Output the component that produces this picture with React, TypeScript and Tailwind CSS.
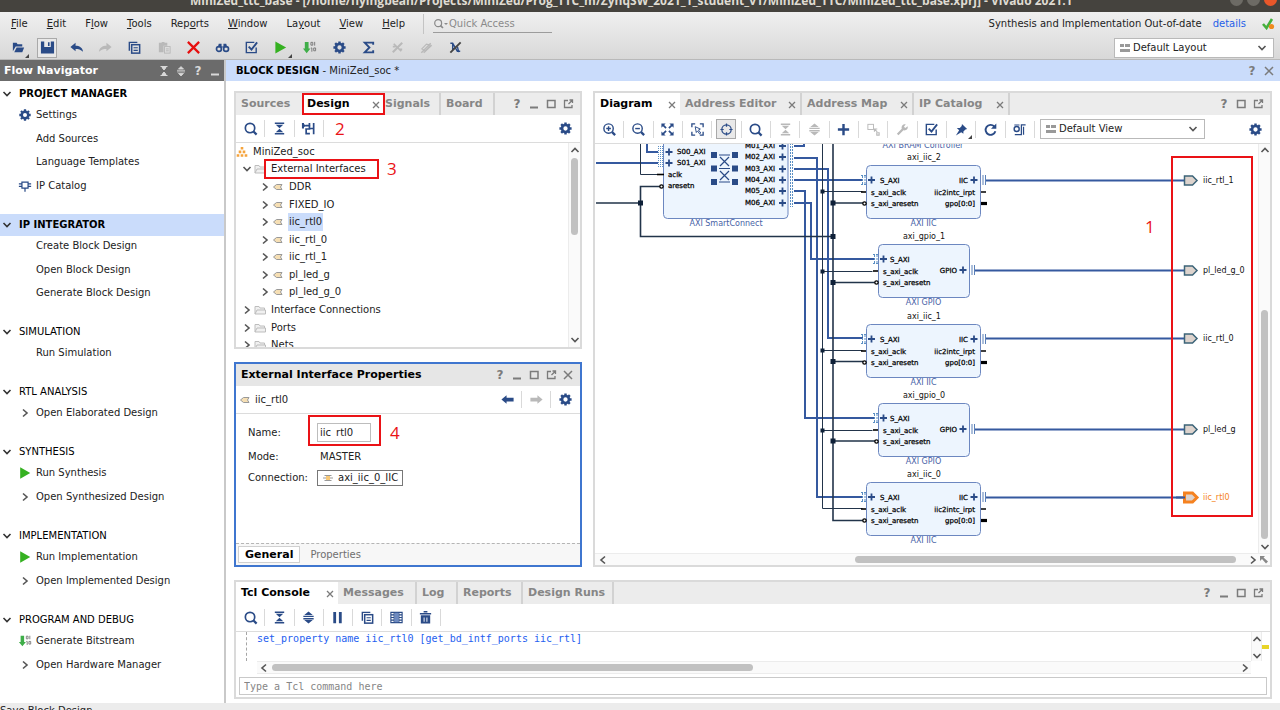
import React from "react";
import clsx from "clsx";

const NAVY = "#2a4b87";

type IconName =
  | "open" | "save" | "undo" | "redo" | "copy" | "paste" | "delete" | "find" | "check"
  | "run" | "bits" | "gear" | "sigma" | "crossA" | "crossB" | "crossC" | "search"
  | "collapse" | "expand" | "hier" | "zoomIn" | "zoomOut" | "fit" | "select" | "target"
  | "plus" | "connect" | "wrench" | "pin" | "refresh" | "route" | "pause" | "table"
  | "trash" | "left" | "right" | "chip";

const shapes: Record<IconName, React.ReactNode> = {
  open: (
    <>
      <path d="M2 12V3h4l1 1.500h5V7H5z" fill="currentColor" />
      <path d="M3.500 13 6 8h8l-2 5z" fill="currentColor" />
    </>
  ),
  save: <path fillRule="evenodd" d="M1 1.500h14v13H1zM4.500 1.500v6h7v-6zM8.500 2.500v4h1.700v-4z" fill="currentColor" />,
  undo: <path d="M1.500 7.500 7 3v3c4 0 7.500 2 8 6.500C12.500 10 10 9.500 7 9.500V12z" fill="currentColor" />,
  redo: <path d="M14.500 7.500 9 3v3c-4 0-7.500 2-8 6.500C3.500 10 6 9.500 9 9.500V12z" fill="currentColor" />,
  copy: (
    <>
      <path d="M2.500 11.500v-9H11" fill="none" stroke="currentColor" strokeWidth="1.500" />
      <rect x="5" y="5" width="8.500" height="9" fill="none" stroke="currentColor" strokeWidth="1.600" />
      <path d="M7 8.200h4.500M7 11h4.500" stroke="currentColor" strokeWidth="1.200" />
    </>
  ),
  paste: (
    <>
      <path d="M2 3h3V2h3v1h3v3H7v7H2z" fill="currentColor" />
      <rect x="8" y="7" width="6" height="7" fill="none" stroke="currentColor" />
      <path d="M9.500 9.500h3M9.500 11.500h3" stroke="currentColor" />
    </>
  ),
  delete: <path d="m2 2 12 12M14 2 2 14" stroke="currentColor" strokeWidth="2.400" />,
  find: (
    <>
      <path d="M4 4h3v3h2V4h3l1 4H3z" fill="currentColor" />
      <circle cx="4.200" cy="9.500" r="2.600" fill="none" stroke="currentColor" strokeWidth="1.800" />
      <circle cx="11.800" cy="9.500" r="2.600" fill="none" stroke="currentColor" strokeWidth="1.800" />
    </>
  ),
  check: (
    <>
      <path d="M13 8v5.500H2.500v-11H11" fill="none" stroke="currentColor" strokeWidth="1.500" />
      <path d="m5 7 3 3.200L14 2.500" fill="none" stroke="currentColor" strokeWidth="2" />
    </>
  ),
  run: <path d="M2.500 1.500 14 8 2.500 14.500z" fill="#35b121" />,
  bits: (
    <>
      <path d="M3 2h4v7h2l-4 5-4-5h2z" fill="#3fae49" />
      <path d="M9.500 2.500h2v3h-2zM9.500 8.500h1v4M13.500 2v4M12.500 8.500h2v3h-2z" fill="none" stroke="#777" />
    </>
  ),
  gear: (
    <>
      <circle cx="8" cy="8" r="3.700" fill="none" stroke="currentColor" strokeWidth="2.800" />
      <path
        d="M8 1.500v2M8 12.500v2M1.500 8h2M12.500 8h2M3.400 3.400l1.400 1.400M11.200 11.200l1.400 1.400M3.400 12.600l1.400-1.400M11.200 4.800l1.400-1.400"
        stroke="currentColor"
        strokeWidth="2.600"
      />
    </>
  ),
  sigma: <path d="M13 5V2.800H4L9 8l-5 5.200h9V11" fill="none" stroke="currentColor" strokeWidth="2" />,
  crossA: (
    <>
      <path d="m3 13 10-10" stroke="currentColor" strokeWidth="2.200" />
      <path d="m4 4 8 8M3 7h3M10 10h3" stroke="currentColor" strokeWidth="1.800" />
    </>
  ),
  crossB: (
    <>
      <path d="m2.500 13.500 10-10M5 13.500l8.500-8" stroke="currentColor" strokeWidth="1.500" />
      <path d="m3 9.500 5-5 4 1-5 6z" fill="none" stroke="currentColor" strokeWidth="1.200" />
    </>
  ),
  crossC: (
    <>
      <path d="M2.500 3.500H5l5 8.500h3M5 4v6l3-2M10 7l1.500 6" fill="none" stroke={NAVY} strokeWidth="1.500" />
      <path d="m2.500 13.500 11-11" stroke="#444" strokeWidth="2" />
    </>
  ),
  search: (
    <>
      <circle cx="7.500" cy="7.500" r="5" fill="none" stroke="currentColor" strokeWidth="1.800" />
      <path d="m11 11 3.500 3.500" stroke="currentColor" strokeWidth="2.400" />
    </>
  ),
  collapse: <path d="M3 1.500h10v1.700H3zM3 12.800h10v1.700H3zM4 4h8L8 7.700zM4 12h8L8 8.300z" fill="currentColor" />,
  expand: <path d="M2.500 6h11v1.500h-11zM2.500 8.500h11V10h-11zM3.500 5.300h9L8 1.500zM3.500 10.700h9L8 14.500z" fill="currentColor" />,
  hier: (
    <>
      <path d="M1 2h2.200v1.500L6.500 5 3.200 6.500V8H1z" fill="currentColor" />
      <path d="M5 5h5M10 8h4M9 2v6.500M4.500 8.500h5.500M5.500 8.500v5h4M13.500 2v12" fill="none" stroke="currentColor" strokeWidth="1.800" />
    </>
  ),
  zoomIn: (
    <>
      <circle cx="7" cy="7" r="5" fill="none" stroke="currentColor" strokeWidth="1.500" />
      <path d="M4.500 7h5M7 4.500v5" stroke="currentColor" strokeWidth="1.500" />
      <path d="m10.800 10.800 3.200 3.200" stroke="currentColor" strokeWidth="2.400" />
    </>
  ),
  zoomOut: (
    <>
      <circle cx="7" cy="7" r="5" fill="none" stroke="currentColor" strokeWidth="1.500" />
      <path d="M4.500 7h5" stroke="currentColor" strokeWidth="1.500" />
      <path d="m10.800 10.800 3.200 3.200" stroke="currentColor" strokeWidth="2.400" />
    </>
  ),
  fit: (
    <>
      <path d="M1.500 1.500H6L1.500 6zM14.500 1.500V6L10 1.500zM1.500 14.500V10L6 14.500zM14.500 14.500H10l4.500-4.500z" fill="currentColor" />
      <path d="m3 3 3.500 3.500M13 3 9.500 6.500M3 13l3.500-3.500M13 13 9.500 9.500" stroke="currentColor" strokeWidth="1.800" />
    </>
  ),
  select: (
    <>
      <path d="M2 5.500V2h3.500M10.500 2H14v3.500M2 10.500V14h3.500M10.500 14H14v-3.500" fill="none" stroke="currentColor" strokeWidth="1.400" />
      <path d="m5.500 5 5.500 2.500-2 1 2.500 3.200-1.200 1L8 9.500l-1.300 1.700z" fill="none" stroke="currentColor" />
    </>
  ),
  target: (
    <>
      <circle cx="8" cy="8" r="5" fill="none" stroke="currentColor" strokeWidth="1.300" />
      <path d="M8 1.500V5M8 11v3.500M1.500 8H5M11 8h3.500" stroke="currentColor" strokeWidth="1.300" />
    </>
  ),
  plus: <path d="M8 2v12M2 8h12" stroke="currentColor" strokeWidth="2.600" />,
  connect: (
    <>
      <rect x="2" y="2.500" width="6" height="5.500" fill="none" stroke="currentColor" />
      <path d="M9 7.500 12 10.500M9 10.500v-3h3M11.500 11.500h2.500V14h-2.500z" fill="none" stroke="currentColor" strokeWidth="1.200" />
    </>
  ),
  wrench: <path d="M2 12.500 7.200 7.200C6.500 4.500 8.500 2 11.500 2.500L9.500 5l1.500 1.500L13.500 4.500c.7 3-1.700 5-4.500 4.300L3.700 14z" fill="currentColor" />,
  pin: <path d="m8.500 2 5.500 5.500-1.800.5L10 10.200v2.300L7.700 11 2 14.500 5.500 8.800 3 6.500h3.200L8.200 4.300z" fill="currentColor" />,
  refresh: (
    <>
      <path d="M12 4.800A5.300 5.300 0 1 0 13.200 9.800" fill="none" stroke="currentColor" strokeWidth="2" />
      <path d="M14.200 1.500V7.300H8.500z" fill="currentColor" />
    </>
  ),
  route: (
    <>
      <circle cx="5" cy="7.500" r="2.700" fill="none" stroke="currentColor" strokeWidth="1.500" />
      <path d="M2.500 3.200H8M3 13.500h7V3H14.500M12.300 5v8.500" fill="none" stroke="currentColor" strokeWidth="1.300" />
    </>
  ),
  pause: <path d="M3.500 2h3v12h-3zM9.500 2h3v12h-3z" fill="currentColor" />,
  table: (
    <>
      <path
        d="M2 2.500h12v11H2zM5.500 2.500v11M10.500 2.500v11M2 5.200h3.500M2 8h3.500M2 10.800h3.500M10.500 5.200H14M10.500 8H14M10.500 10.800H14"
        fill="none"
        stroke="currentColor"
        strokeWidth="1.200"
      />
      <path d="M6 3h4v10H6z" fill="#6d8ac0" />
    </>
  ),
  trash: (
    <>
      <path d="M6 1.800h4M2 4h12" stroke="currentColor" strokeWidth="1.700" />
      <path fillRule="evenodd" d="M3 5.700h10v8.800H3zM6 8v4.500h1V8zM9 8v4.500h1V8z" fill="currentColor" />
    </>
  ),
  left: <path d="M1.500 8 7 3.500V6h7.500v4H7v2.500z" fill="currentColor" />,
  right: <path d="M14.500 8 9 3.500V6H1.500v4H9v2.500z" fill="currentColor" />,
  chip: (
    <path
      d="M4.500 3.500h7v7h-7zM1 5.500h3.500M1 8.500h3.500M11.500 5.500H15M11.500 8.500H15M8 10.500v4"
      fill="none"
      stroke="currentColor"
      strokeWidth="1.400"
    />
  ),
};

const Icon = ({ name, className = "size-[15px]" }: { name: IconName; className?: string }) => (
  <svg viewBox="0 0 16 16" className={clsx("shrink-0", className)} aria-hidden="true">
    {shapes[name]}
  </svg>
);

type Tool = { icon: IconName; label: string; off?: boolean; boxed?: boolean; menu?: boolean; red?: boolean };

const ToolButton = ({ tool, divider }: { tool: Tool; divider?: boolean }) => (
  <button
    type="button"
    aria-label={tool.label}
    className={clsx(
      "flex h-[17px] min-w-0 items-center justify-center border-r",
      divider ? "border-[#d9d9d9]" : "border-transparent",
      tool.red ? "text-[#e60f0f]" : tool.off ? "text-[#b9b9b9]" : "text-[#2a4b87]",
    )}
  >
    <span
      className={clsx(
        "relative flex size-5 shrink-0 items-center justify-center",
        tool.boxed && "border border-[#a9a9a9] bg-[#e9e9e9]",
      )}
    >
      <Icon name={tool.icon} />
      {tool.menu && (
        <svg viewBox="0 0 4 4" className="absolute -right-[1px] bottom-0 size-1">
          <path d="M4 0v4H0z" fill="#444" />
        </svg>
      )}
    </span>
  </button>
);

const WindowIcons = ({ items }: { items: string }) => (
  <div className="flex items-center gap-[5px] text-[#7b7b7b]">
    {items.split("").map((kind) => (
      <button key={kind} type="button" aria-label={kind} className="flex size-3 items-center justify-center">
        {kind === "?" ? (
          <span className="text-[12px] leading-3 font-bold">?</span>
        ) : (
          <svg viewBox="0 0 12 12" className="size-3" fill="none" stroke="currentColor" strokeWidth="1.500">
            {kind === "_" && <path d="M2 9.500h8" strokeWidth="2" />}
            {kind === "o" && <path d="M2.500 2.500h7.500v7H2.500z" />}
            {kind === "f" && <path d="M6 2.500H2.500v7H10V7M6.500 6 10 2.500M7.500 2h3v3" strokeWidth="1.300" />}
            {kind === "x" && <path d="m2 2 8 8M10 2l-8 8" />}
            {kind === "c" && <path d="M2.500 1.500h7M2.500 10.500h7M4 2.500 6 5l2-2.500zM4 9.500 6 7l2 2.500z" fill="currentColor" strokeWidth="1" />}
            {kind === "e" && <path d="M2 5.300h8M2 6.900h8M3.500 4 6 1.500 8.500 4zM3.500 8.500 6 11l2.500-2.500z" fill="currentColor" strokeWidth="0.800" />}
          </svg>
        )}
      </button>
    ))}
  </div>
);

const Chevron = ({ dir, className = "text-[#555]" }: { dir: "down" | "right" | "up" | "left"; className?: string }) => (
  <svg viewBox="0 0 10 10" className={clsx("size-[10px] shrink-0", className)} fill="none" stroke="currentColor" strokeWidth="1.600">
    {dir === "down" && <path d="m1.500 3 3.500 3.500L8.500 3" />}
    {dir === "right" && <path d="m3 1.500 4 3.500-4 3.500" />}
    {dir === "up" && <path d="M1.500 7 5 3.500 8.500 7" />}
    {dir === "left" && <path d="M7 1.500 3 5l4 3.500" />}
  </svg>
);

type TabItem = { label: string; width: string; active?: boolean; close?: boolean; line?: boolean; tight?: boolean };

const TabStrip = ({ tabs, icons }: { tabs: TabItem[]; icons: string }) => (
  <div className="flex h-[22px] shrink-0 items-stretch bg-[#ececec] pr-[6px]">
    {tabs.map((tab) => (
      <div
        key={tab.label}
        className={clsx(
          "flex shrink-0 items-center justify-between pr-1",
          tab.width,
          tab.tight ? "pl-[1px]" : "pl-[5px]",
          tab.active && "bg-white",
          tab.line && "border-r-2 border-[#d2d2d2]",
        )}
      >
        <button
          type="button"
          className={clsx("text-[11px] font-bold whitespace-nowrap", tab.active ? "text-black" : "text-[#868686]")}
        >
          {tab.label}
        </button>
        {tab.close && (
          <button type="button" aria-label={`Close ${tab.label}`} className="pt-[2px] text-[#7b7b7b]">
            <svg viewBox="0 0 8 8" className="size-2" fill="none" stroke="currentColor" strokeWidth="1.300">
              <path d="m1 1 6 6M7 1 1 7" />
            </svg>
          </button>
        )}
      </div>
    ))}
    <div className="ml-auto flex items-center">
      <WindowIcons items={icons} />
    </div>
  </div>
);

const menus = [
  ["", "F", "ile"],
  ["", "E", "dit"],
  ["F", "l", "ow"],
  ["", "T", "ools"],
  ["Rep", "o", "rts"],
  ["", "W", "indow"],
  ["La", "y", "out"],
  ["", "V", "iew"],
  ["", "H", "elp"],
];

const mainTools: Tool[] = [
  { icon: "open", label: "Open", menu: true },
  { icon: "save", label: "Save", boxed: true },
  { icon: "undo", label: "Undo" },
  { icon: "redo", label: "Redo", off: true },
  { icon: "copy", label: "Copy" },
  { icon: "paste", label: "Paste", off: true },
  { icon: "delete", label: "Delete", red: true },
  { icon: "find", label: "Find" },
  { icon: "check", label: "Validate" },
  { icon: "run", label: "Run", menu: true },
  { icon: "bits", label: "Bitstream" },
  { icon: "gear", label: "Settings" },
  { icon: "sigma", label: "Summary" },
  { icon: "crossA", label: "Unroute", off: true },
  { icon: "crossB", label: "Unmark", off: true },
  { icon: "crossC", label: "Unselect" },
];

const diagramTools: Tool[] = [
  { icon: "zoomIn", label: "Zoom in" },
  { icon: "zoomOut", label: "Zoom out" },
  { icon: "fit", label: "Zoom fit" },
  { icon: "select", label: "Select area" },
  { icon: "target", label: "Auto fit", boxed: true },
  { icon: "search", label: "Search" },
  { icon: "collapse", label: "Collapse", off: true },
  { icon: "expand", label: "Expand", off: true },
  { icon: "plus", label: "Add IP" },
  { icon: "connect", label: "Connect", off: true },
  { icon: "wrench", label: "Customize", off: true },
  { icon: "check", label: "Validate design" },
  { icon: "pin", label: "Pin", menu: true },
  { icon: "refresh", label: "Regenerate" },
  { icon: "route", label: "Optimize routing" },
];

const designTools: Tool[] = [
  { icon: "search", label: "Search design" },
  { icon: "collapse", label: "Collapse all" },
  { icon: "hier", label: "Hierarchy" },
];

const consoleTools: Tool[] = [
  { icon: "search", label: "Search console" },
  { icon: "collapse", label: "Collapse all" },
  { icon: "expand", label: "Expand all" },
  { icon: "pause", label: "Pause" },
  { icon: "copy", label: "Copy" },
  { icon: "table", label: "Columns" },
  { icon: "trash", label: "Clear" },
];

type NavItem = { label: string; icon?: IconName | "chevron" };
const sections: { title: string; bold?: boolean; selected?: boolean; items: NavItem[] }[] = [
  {
    title: "PROJECT MANAGER",
    bold: true,
    items: [
      { label: "Settings", icon: "gear" },
      { label: "Add Sources" },
      { label: "Language Templates" },
      { label: "IP Catalog", icon: "chip" },
    ],
  },
  {
    title: "IP INTEGRATOR",
    bold: true,
    selected: true,
    items: [{ label: "Create Block Design" }, { label: "Open Block Design" }, { label: "Generate Block Design" }],
  },
  { title: "SIMULATION", items: [{ label: "Run Simulation" }] },
  { title: "RTL ANALYSIS", items: [{ label: "Open Elaborated Design", icon: "chevron" }] },
  {
    title: "SYNTHESIS",
    items: [
      { label: "Run Synthesis", icon: "run" },
      { label: "Open Synthesized Design", icon: "chevron" },
    ],
  },
  {
    title: "IMPLEMENTATION",
    items: [
      { label: "Run Implementation", icon: "run" },
      { label: "Open Implemented Design", icon: "chevron" },
    ],
  },
  {
    title: "PROGRAM AND DEBUG",
    items: [
      { label: "Generate Bitstream", icon: "bits" },
      { label: "Open Hardware Manager", icon: "chevron" },
    ],
  },
];

const FlowNavigator = () => (
  <nav className="flex w-[226px] shrink-0 flex-col border-r-2 border-[#c9c9c9] bg-white">
    <div className="flex h-[21px] shrink-0 items-center justify-between bg-[#6b6b6b] pr-[3px] pl-1 text-white">
      <h2 className="text-[11px] font-bold">Flow Navigator</h2>
      <div className="[&_button]:text-[#d8d8d8]">
        <WindowIcons items="ce?_" />
      </div>
    </div>
    <div className="pt-[2px]">
      {sections.map((section) => (
        <section key={section.title} className="mb-[18px]">
          <h3
            className={clsx(
              "flex h-[22px] items-center gap-[7px] pl-[2px] text-black",
              section.selected && "bg-[#cadcfb]",
            )}
          >
            <Chevron dir="down" className="text-[#333]" />
            <span className={section.bold ? "text-[10px] font-bold" : "text-[10px]"}>{section.title}</span>
          </h3>
          <ul>
            {section.items.map((item) => (
              <li key={item.label} className="h-5 not-first:odd:mt-[3px] even:mt-1">
                <button type="button" className="flex h-5 items-center gap-1 pl-[17px] text-[#222]">
                  <span className="flex w-[15px] justify-center text-[#2a4b87]">
                    {item.icon === "chevron" && <Chevron dir="right" />}
                    {item.icon && item.icon !== "chevron" && <Icon name={item.icon} className="size-[14px]" />}
                  </span>
                  {item.label}
                </button>
              </li>
            ))}
          </ul>
        </section>
      ))}
    </div>
  </nav>
);

const PortIcon = () => (
  <svg viewBox="0 0 10 8" className="h-2 w-[10px] shrink-0">
    <path d="M.5 4 3.500 1.500H9L7.500 4 9 6.500H3.500z" fill="#f6dfb4" stroke="#999" />
  </svg>
);

const FolderIcon = () => (
  <svg viewBox="0 0 12 10" className="h-[10px] w-3 shrink-0">
    <path d="M1 9V1.500h4L6 3h4.500v2M3 5h8.500v4H1z" fill="#f0f0f0" stroke="#bdbdbd" />
  </svg>
);

type TreeRow = { label: string; level: number; open?: boolean; selected?: boolean };
const treeRows: TreeRow[] = [
  { label: "External Interfaces", level: 1, open: true },
  { label: "DDR", level: 2 },
  { label: "FIXED_IO", level: 2 },
  { label: "iic_rtl0", level: 2, selected: true },
  { label: "iic_rtl_0", level: 2 },
  { label: "iic_rtl_1", level: 2 },
  { label: "pl_led_g", level: 2 },
  { label: "pl_led_g_0", level: 2 },
  { label: "Interface Connections", level: 1 },
  { label: "Ports", level: 1 },
  { label: "Nets", level: 1 },
];

const DesignPanel = () => (
  <section className="flex min-h-0 flex-1 flex-col border-2 border-[#dadada] bg-white">
    <div className="relative">
      <TabStrip
        icons="?_of"
        tabs={[
          { label: "Sources", width: "w-[66px]" },
          { label: "Design", width: "w-[82px]", active: true, close: true },
          { label: "Signals", width: "w-[57px]", line: true, tight: true },
          { label: "Board", width: "w-[54px]", line: true },
        ]}
      />
      <div className="pointer-events-none absolute top-0 left-[66px] h-[22px] w-[83px] border-2 border-[#ea1216]" />
    </div>
    <div className="flex h-[28px] shrink-0 items-center justify-between border-b border-[#dcdcdc] pr-[7px]">
      <div className="flex items-center">
        <div className="grid w-[88px] grid-cols-3">
          {designTools.map((t) => (
            <ToolButton key={t.label} tool={t} divider />
          ))}
        </div>
        <span className="ml-[11px] font-['Open_Sans',sans-serif] text-[17px] leading-5 text-[#ea1216]">2</span>
      </div>
      <button type="button" aria-label="Design settings" className="text-[#2a4b87]">
        <Icon name="gear" />
      </button>
    </div>
    <div className="flex min-h-0 flex-1 overflow-hidden">
      <div className="flex h-[211px] flex-1 flex-col">
        <div className="flex flex-1 items-center gap-[5px]">
          <svg viewBox="0 0 12 10" className="h-[10px] w-3" fill="#f5a33b">
            <path d="M4.700 0h2.600v2.600H4.700zM2.700 3.600h2.600v2.600H2.700zM6.700 3.600h2.600v2.600H6.700zM.7 7.200h2.600v2.600H.7zM4.700 7.200h2.600v2.600H4.700zM8.700 7.200h2.600v2.600H8.700z" />
          </svg>
          MiniZed_soc
        </div>
        {treeRows.map((row) => (
          <div key={row.label} className={clsx("flex flex-1 items-center", row.level === 1 ? "pl-[6px]" : "pl-[24px]")}>
            <Chevron dir={row.open ? "down" : "right"} />
            <span className="mr-1 ml-[2px] flex w-3 justify-center">
              {row.level === 1 ? <FolderIcon /> : <PortIcon />}
            </span>
            {row.open ? (
              <span className="relative px-[1px]">
                {row.label}
                <span className="pointer-events-none absolute -top-[3px] -left-[6px] h-5 w-[115px] border-2 border-[#ea1216]" />
                <span className="absolute -top-[3px] left-[117px] font-['Open_Sans',sans-serif] text-[17px] leading-5 text-[#ea1216]">
                  3
                </span>
              </span>
            ) : (
              <span className={clsx("flex h-full items-center px-[1px]", row.selected && "bg-[#cadcfb]")}>{row.label}</span>
            )}
          </div>
        ))}
      </div>
      <div className="flex w-3 shrink-0 flex-col items-center justify-between border-l border-[#ececec] bg-[#fafafa] py-[2px]">
        <Chevron dir="up" />
        <div className="mt-[3px] mb-auto h-[77px] w-[7px] rounded-full bg-[#c1c1c1]" />
        <Chevron dir="down" />
      </div>
    </div>
  </section>
);

const PropertiesPanel = () => (
  <section className="flex h-[205px] shrink-0 flex-col border-2 border-[#3f76cf] bg-white">
    <div className="flex h-[22px] shrink-0 items-center justify-between bg-[#e6e6e6] pr-[6px] pl-[5px]">
      <h2 className="text-[11px] font-bold text-black">External Interface Properties</h2>
      <WindowIcons items="?_ofx" />
    </div>
    <div className="flex h-[28px] shrink-0 items-center border-b border-[#dcdcdc] pr-[7px] pl-1">
      <PortIcon />
      <span className="ml-[5px]">iic_rtl0</span>
      <div className="ml-auto flex items-center">
        <button type="button" aria-label="Back" className="flex h-[17px] w-[29px] items-center justify-center border-r border-[#d9d9d9] text-[#2a4b87]">
          <Icon name="left" />
        </button>
        <button type="button" aria-label="Forward" className="flex h-[17px] w-[29px] items-center justify-center border-r border-[#d9d9d9] text-[#b9b9b9]">
          <Icon name="right" />
        </button>
        <button type="button" aria-label="Property settings" className="ml-[7px] text-[#2a4b87]">
          <Icon name="gear" />
        </button>
      </div>
    </div>
    <div className="flex flex-1 flex-col pl-3">
      <div className="mt-[9px] flex h-[19px] items-center">
        <label htmlFor="if-name" className="w-[69px]">
          Name:
        </label>
        <div className="relative">
          <input
            id="if-name"
            defaultValue="iic_rtl0"
            className="block h-[19px] w-[54px] border border-[#bdbdbd] bg-white px-[2px] leading-[17px]"
          />
          <span className="pointer-events-none absolute -top-2 -left-[9px] h-[31px] w-[73px] border-2 border-[#ea1216]" />
        </div>
        <span className="ml-[19px] font-['Open_Sans',sans-serif] text-[17px] leading-5 text-[#ea1216]">4</span>
      </div>
      <div className="mt-[6px] flex h-[17px] items-center">
        <span className="w-[72px]">Mode:</span>
        <span>MASTER</span>
      </div>
      <div className="mt-[5px] flex h-4 items-center">
        <span className="w-[69px]">Connection:</span>
        <button type="button" className="flex h-4 items-center gap-1 border border-[#777] px-1">
          <svg viewBox="0 0 12 8" className="h-2 w-3">
            <path d="M4 1h4v6H4z" fill="#f7c877" />
            <path d="M1 4h3M2.500 1.500h7M2.500 6.500h7M8 4h3" stroke="#999" />
          </svg>
          axi_iic_0_IIC
        </button>
      </div>
    </div>
    <div className="flex h-[22px] shrink-0 items-center border-t border-dashed border-[#b5b5b5] bg-[#f7f7f7] pl-[2px]">
      <button type="button" className="h-[17px] border border-[#d0d0d0] bg-white px-[6px] text-[11px] font-bold text-black">
        General
      </button>
      <button type="button" className="ml-[10px] text-[#6f6f6f]">
        Properties
      </button>
    </div>
  </section>
);

const plusPath = (x: number, y: number) => `M${x - 3.5} ${y}h7M${x} ${y - 3.5}v7`;

const blocks = [
  { kind: "iic", name: "axi_iic_2", y: 165 },
  { kind: "gpio", name: "axi_gpio_1", y: 244 },
  { kind: "iic", name: "axi_iic_1", y: 324 },
  { kind: "gpio", name: "axi_gpio_0", y: 403 },
  { kind: "iic", name: "axi_iic_0", y: 482 },
];

const ports = [
  { label: "iic_rtl_1", y: 180, from: 986 },
  { label: "pl_led_g_0", y: 270, from: 974 },
  { label: "iic_rtl_0", y: 338, from: 986 },
  { label: "pl_led_g", y: 429, from: 974 },
  { label: "iic_rtl0", y: 497, from: 986, selected: true },
];

const WIRE = "#35599f";
const DARK = "#22344a";

const Block = ({ kind, name, y }: { kind: string; name: string; y: number }) => {
  const iic = kind === "iic";
  const x = iic ? 866 : 878;
  const w = iic ? 114 : 91;
  const pinY = iic ? y + 15 : y + 26;
  return (
    <g>
      <rect x={x + 0.5} y={y + 0.5} width={w} height={53} rx="4" fill="#edf5fe" stroke="#6c87c0" />
      <text x={924} y={y - 5} textAnchor="middle" fontSize="8" fill="#111">{name}</text>
      <text x={923.5} y={y + 61} textAnchor="middle" fontSize="8" fill="#4862a6">{iic ? "AXI IIC" : "AXI GPIO"}</text>
      <path d={plusPath(x + 5.5, y + 15)} stroke={NAVY} strokeWidth="1.800" />
      <path d={plusPath(x + w - 6, pinY)} stroke={NAVY} strokeWidth="1.800" />
      <g fontSize="7" fill="#000" stroke="#000" strokeWidth="0.250">
        <text x={x + (iic ? 14 : 12)} y={y + 17.5}>S_AXI</text>
        <text x={x + 5} y={y + 29.5}>s_axi_aclk</text>
        <text x={x + 5} y={y + 41}>s_axi_aresetn</text>
        <text x={x + w - 12} y={pinY + 2.5} textAnchor="end">{iic ? "IIC" : "GPIO"}</text>
        {iic && <text x={x + w - 5} y={y + 29.5} textAnchor="end">iic2intc_irpt</text>}
        {iic && <text x={x + w - 5} y={y + 41} textAnchor="end">gpo[0:0]</text>}
      </g>
      <path
        d={`M${x - 5} ${y + 10.5}h5M${x - 5} ${y + 19.5}h5M${x - 3.5} ${y + 11}v9M${x - 1} ${y + 11}v9`}
        stroke="#5a8fc4"
        strokeDasharray="2 1"
        fill="none"
      />
      <path d={`M${x - 5} ${y + 27}h5`} stroke="#000" strokeWidth="1.600" />
      <circle cx={x - 1.5} cy={y + 38.5} r="1.700" fill="#fff" stroke="#000" strokeWidth="1.300" />
      <path d={`M${x + w + 3} ${pinY - 5}v10M${x + w + 5.5} ${pinY - 5}v10`} stroke="#5a80b8" />
      {iic && <path d={`M${x + w + 1} ${y + 27}h5`} stroke="#000" strokeWidth="1.500" />}
      {iic && <path d={`M${x + w + 1} ${y + 38.5}h6`} stroke="#000" strokeWidth="3.200" />}
    </g>
  );
};

const Diagram = () => (
  <svg viewBox="596 144 663 409" width="663" height="409" className="block shrink-0 font-['DejaVu_Sans',sans-serif]">
    <g fill="none" stroke={WIRE} strokeWidth="2">
      <path d="M647 140v12h11M596 163h62M794 146h10v-8" />
      <path d="M794 158h23v339h46M794 169h34v169h35M794 180h69" />
      <path d="M794 191h11v227h69M794 203h17v56h63" />
      {ports.map((p) => (
        <path key={p.label} d={`M${p.from} ${p.y + 0.5}H1185`} />
      ))}
    </g>
    <g fill="none" stroke={DARK}>
      <path d="M640.500 140v34.500h20M822.500 140v368.500h40M822.500 191.500h40M822.500 271.500h50M822.500 350.500h40M822.500 430.500h50" />
      <path
        d="M596 203h45M662 186.500h-21.500v50H833M833 140v380.500h30M833 203h30M833 282.500h42M833 361.500h30M833 441h42"
        strokeWidth="1.600"
      />
    </g>
    <g fill="#0e2038">
      {[203, 236.5, 282.5, 361.5, 441].map((y) => (
        <rect key={y} x="830.500" y={y - 2.5} width="5" height="5" />
      ))}
      {[191.5, 271.5, 350.5, 430.5].map((y) => (
        <rect key={y} x="820.500" y={y - 2} width="4" height="4" />
      ))}
      <rect x="638" y="200.500" width="5" height="5" />
    </g>

    <rect x="663.500" y="130" width="124.500" height="88.500" rx="4" fill="#edf5fe" stroke="#6c87c0" />
    <text x="726" y="226" textAnchor="middle" fontSize="8" fill="#4862a6">AXI SmartConnect</text>
    <g fontSize="7" fill="#000" stroke="#000" strokeWidth="0.250">
      <text x="677" y="154">S00_AXI</text>
      <text x="677" y="165">S01_AXI</text>
      <text x="668" y="177">aclk</text>
      <text x="668" y="188">aresetn</text>
      {[148, 159, 171, 182, 193, 205].map((y, i) => (
        <text key={y} x="775" y={y} textAnchor="end">{`M0${i + 1}_AXI`}</text>
      ))}
    </g>
    <path
      d={[plusPath(669, 152), plusPath(669, 163), ...[146, 157, 169, 180, 191, 203].map((y) => plusPath(782.5, y))].join("")}
      stroke={NAVY}
      strokeWidth="1.800"
    />
    <path d="M658.500 146v21M660.500 146v21M662.500 146v21" stroke="#5a8fc4" strokeDasharray="1 1" />
    <path d="M790.500 140v67M792.500 140v67" stroke="#5a8fc4" strokeDasharray="2 1" />
    <path d="M657 174.500h7" stroke="#000" strokeWidth="1.600" />
    <circle cx="661.500" cy="186.500" r="1.700" fill="#fff" stroke="#000" strokeWidth="1.300" />
    <g fill={NAVY}>
      {[152, 165.5, 179].map((y) => (
        <g key={y}>
          <rect x="711" y={y} width="6" height="6" />
          <rect x="732" y={y} width="6" height="6" />
          <rect x="719" y={y + 2.5} width="11" height="1" />
        </g>
      ))}
    </g>
    <path d="m720 157 9 9M729 157l-9 9M720 171l9 9M729 171l-9 9" stroke={NAVY} strokeWidth="1.200" />

    <text x="923" y="148" textAnchor="middle" fontSize="8" fill="#4862a6">AXI BRAM Controller</text>
    {blocks.map((b) => (
      <Block key={b.name} {...b} />
    ))}
    {ports.map((p) => (
      <g key={p.label}>
        <path
          d={`M1184.500 ${p.y - 4}h8l4.500 4.500-4.500 4.500h-8z`}
          fill="#ddd3cd"
          stroke={p.selected ? "#f58220" : "#3c6478"}
          strokeWidth={p.selected ? 3 : 1.5}
        />
        <text x="1203" y={p.y + 3} fontSize="8" fill={p.selected ? "#f58220" : "#111"}>{p.label}</text>
      </g>
    ))}
    <path d="M1176 497.500h9" stroke={WIRE} strokeWidth="2" />
    <rect x="1172" y="157" width="80" height="359" fill="none" stroke="#ea1216" strokeWidth="2" />
    <text x="1145" y="233" fontSize="17" fill="#ea1216" className="font-['Open_Sans',sans-serif]">1</text>
  </svg>
);

const LayoutSelect = ({ label, value, className }: { label: string; value: string; className: string }) => (
  <div className={clsx("flex items-center border border-[#b9b9b9] bg-white pr-[6px] pl-1", className)}>
    <svg viewBox="0 0 12 10" className="h-[10px] w-3 shrink-0" fill="#999">
      <path d="M1 1h4v3H1zM6 1h5v3H6zM1 6h10v3H1z" />
    </svg>
    <select aria-label={label} className="ml-[2px] min-w-0 flex-1 appearance-none bg-transparent text-[#222]">
      <option>{value}</option>
    </select>
    <Chevron dir="down" />
  </div>
);

const DiagramPanel = () => (
  <section className="flex min-w-0 flex-1 flex-col border-2 border-[#dadada] bg-white">
    <TabStrip
      icons="?of"
      tabs={[
        { label: "Diagram", width: "w-[85px]", active: true, close: true },
        { label: "Address Editor", width: "w-[122px]", close: true, line: true },
        { label: "Address Map", width: "w-[112px]", close: true, line: true },
        { label: "IP Catalog", width: "w-[96px]", close: true, line: true },
      ]}
    />
    <div className="flex h-[29px] shrink-0 items-center border-b border-[#dcdcdc] pr-[7px]">
      <div className="grid w-[440px] shrink-0 grid-cols-15">
        {diagramTools.map((t) => (
          <ToolButton key={t.label} tool={t} divider />
        ))}
      </div>
      <LayoutSelect label="View" value="Default View" className="ml-[5px] h-5 w-[165px]" />
      <button type="button" aria-label="Diagram settings" className="ml-auto text-[#2a4b87]">
        <Icon name="gear" />
      </button>
    </div>
    <div className="flex min-h-0 flex-1">
      <div className="min-w-0 flex-1 overflow-hidden pl-[1px]">
        <Diagram />
      </div>
      <div className="flex w-3 shrink-0 flex-col items-center justify-between border-l border-[#ececec] bg-[#fafafa] py-[1px]">
        <Chevron dir="up" />
        <div className="mt-auto mb-[3px] h-[229px] w-[7px] rounded-full bg-[#c1c1c1]" />
        <Chevron dir="down" />
      </div>
    </div>
    <div className="flex h-3 shrink-0 items-center border-t border-[#ececec] bg-[#fafafa] pl-[3px]">
      <Chevron dir="left" />
      <div className="mr-3 ml-auto h-[7px] w-[381px] rounded-full bg-[#c1c1c1]" />
      <Chevron dir="right" />
      <svg viewBox="0 0 10 10" className="mr-[1px] ml-[1px] size-[10px]">
        <path d="M1 1h5L4.500 2.500l4.500 4L7 8.500 3 4 1 6z" fill="#888" />
      </svg>
    </div>
  </section>
);

const ConsolePanel = () => (
  <section className="flex h-[119px] shrink-0 flex-col border-2 border-[#dadada] bg-white">
    <TabStrip
      icons="?_of"
      tabs={[
        { label: "Tcl Console", width: "w-[102px]", active: true, close: true },
        { label: "Messages", width: "w-[79px]", line: true },
        { label: "Log", width: "w-[41px]", line: true },
        { label: "Reports", width: "w-[65px]", line: true },
        { label: "Design Runs", width: "w-[91px]", line: true },
      ]}
    />
    <div className="flex h-[28px] shrink-0 items-center border-b border-[#dcdcdc]">
      <div className="grid w-[205px] grid-cols-7">
        {consoleTools.map((t) => (
          <ToolButton key={t.label} tool={t} divider />
        ))}
      </div>
    </div>
    <div className="flex min-h-0 flex-1 pl-[10px]">
      <div className="mb-[13px] w-[11px] border-l border-dashed border-[#a5a5a5]" />
      <div className="flex min-w-0 flex-1 flex-col justify-between">
        <p className="font-['DejaVu_Sans_Mono',monospace] text-[10px] leading-[14px] text-[#1e5ef0]">
          set_property name iic_rtl0 [get_bd_intf_ports iic_rtl]
        </p>
        <div className="flex h-[13px] items-center border-y border-[#ececec] bg-[#fafafa] pl-[2px]">
          <Chevron dir="left" />
          <div className="ml-[3px] h-[7px] w-[481px] rounded-full bg-[#c1c1c1]" />
          <Chevron dir="right" className="mr-[1px] ml-auto text-[#555]" />
        </div>
      </div>
      <div className="mb-[13px] flex w-[11px] flex-col items-center justify-between border-x border-[#ececec] bg-[#fafafa] pt-[2px]">
        <Chevron dir="up" />
        <Chevron dir="down" />
      </div>
      <div className="mt-[13px] mr-[1px] h-1 w-[7px] bg-[#e8d428]" />
    </div>
    <div className="shrink-0 px-[3px] pt-[3px] pb-[2px]">
      <input
        aria-label="Tcl command"
        placeholder="Type a Tcl command here"
        className="block h-[18px] w-full border border-[#c9c9c9] px-1 font-['DejaVu_Sans_Mono',monospace] text-[10px] placeholder:text-[#868686]"
      />
    </div>
  </section>
);

const App = () => {
  return (
    <div className="flex h-screen min-w-[1100px] flex-col overflow-hidden bg-white font-['DejaVu_Sans',sans-serif] text-[10px] leading-[14px] text-[#222]">
      <header className="flex h-3 shrink-0 items-end justify-end overflow-hidden bg-[#45433e]">
        <h1 className="flex-1 pl-[190px] font-['Open_Sans',sans-serif] text-[12px] leading-[23px] font-bold whitespace-nowrap text-[#dfdbd2]">
          MiniZed_ttc_base - [/home/flyingbean/Projects/MiniZed/Prog_TTC_m/ZynqSW_2021_1_student_v1/MiniZed_TTC/MiniZed_ttc_base.xprj] - Vivado 2021.1
        </h1>
        <div className="flex gap-1 pr-[3px] pb-[6px]">
          <span className="size-[13px] rounded-full bg-[#6d6b65]" />
          <span className="size-[13px] rounded-full bg-[#6d6b65]" />
          <span className="size-[13px] rounded-full bg-[#e8572a]" />
        </div>
      </header>

      <div className="flex h-12 shrink-0 flex-col border-b border-[#b9b9b9] bg-linear-to-b from-[#f0f0f0] to-[#d8d8d8]">
        <div className="flex h-6 items-center pr-[5px] pl-[11px]">
          <div className="flex gap-[19px]">
            {menus.map(([before, key, after]) => (
              <button key={before + key + after} type="button">
                {before}
                <span className="underline">{key}</span>
                {after}
              </button>
            ))}
          </div>
          <div className="ml-[18px] h-5 border-l border-[#c4c4c4]" />
          <div className="ml-[9px] flex h-[18px] w-[119px] items-center border-b border-[#9c9c9c] text-[#8a8a8a]">
            <Icon name="search" className="size-[11px]" />
            <svg viewBox="0 0 4 4" className="size-1">
              <path d="M0 1h4L2 3z" fill="currentColor" />
            </svg>
            <input aria-label="Quick Access" placeholder="Quick Access" className="w-[90px] bg-transparent pl-[1px] placeholder:text-[#8a8a8a]" />
          </div>
          <span className="ml-auto text-[#222]">Synthesis and Implementation Out-of-date</span>
          <a href="#details" className="ml-[11px] text-[#1f5fe8]">
            details
          </a>
          <svg viewBox="0 0 14 12" className="ml-[15px] h-3 w-[14px]">
            <path d="m2 6 3.500 4L11 1" fill="none" stroke="#45b03c" strokeWidth="2.600" />
            <circle cx="10.500" cy="8.500" r="2.600" fill="#ef8a1d" />
          </svg>
        </div>
        <div className="flex h-[23px] items-center pr-[6px] pl-1">
          <div className="grid w-[467px] grid-cols-16">
            {mainTools.map((t) => (
              <ToolButton key={t.label} tool={t} />
            ))}
          </div>
          <LayoutSelect label="Layout" value="Default Layout" className="ml-auto h-5 w-[160px]" />
        </div>
      </div>

      <div className="flex min-h-0 flex-1">
        <FlowNavigator />
        <main className="flex min-w-0 flex-1 flex-col">
          <div className="flex h-[21px] shrink-0 items-center justify-between bg-[#cadcfb] pr-[5px] pl-[10px]">
            <h2 className="text-[#222]">
              <strong className="text-black">BLOCK DESIGN</strong> - MiniZed_soc *
            </h2>
            <WindowIcons items="?x" />
          </div>
          <div className="flex min-h-0 flex-1 flex-col gap-[13px] px-2 pt-[10px] pb-1">
            <div className="flex min-h-0 flex-1 gap-[11px]">
              <div className="flex w-[348px] shrink-0 flex-col gap-[13px]">
                <DesignPanel />
                <PropertiesPanel />
              </div>
              <DiagramPanel />
            </div>
            <ConsolePanel />
          </div>
        </main>
      </div>

      <footer className="h-[7px] shrink-0 overflow-hidden bg-[#ececec] pt-[1px]">Save Block Design</footer>
    </div>
  );
};

export default App;
